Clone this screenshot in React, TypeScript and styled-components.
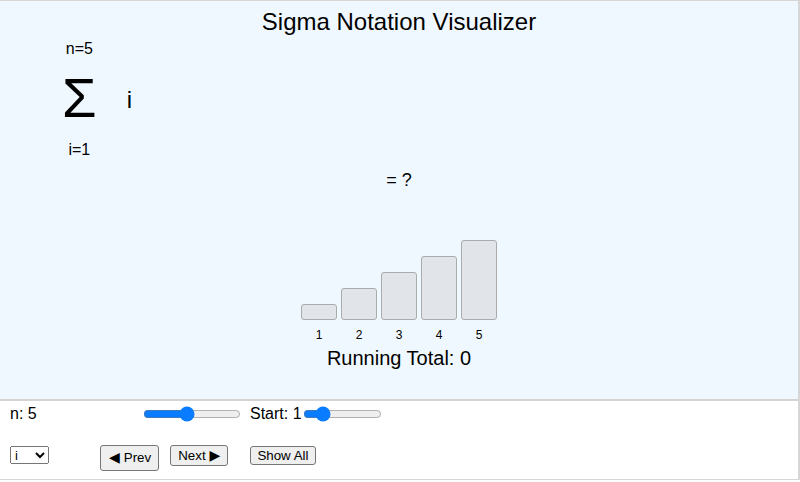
import React, { useState } from 'react';
import styled, { createGlobalStyle } from 'styled-components';

const GlobalStyle = createGlobalStyle`
  html, body {
    margin: 0;
    padding: 0;
    background: #ffffff;
  }
  body {
    font-family: "Liberation Sans", Arial, Helvetica, sans-serif;
    color: #000;
  }
  * {
    box-sizing: border-box;
  }
`;

const Frame = styled.div`
  width: 800px;
  height: 480px;
  border-top: 1px solid #d6d6d6;
  border-right: 2px solid #d6d6d6;
  border-bottom: 1px solid #d6d6d6;
  display: flex;
  flex-direction: column;
`;

const Visual = styled.section`
  height: 400px;
  background: #f0f8ff;
  border-bottom: 2px solid #d4d4d4;
  display: flex;
  flex-direction: column;
`;

const Title = styled.h1`
  margin: 0;
  padding-top: 7px;
  font-size: 24px;
  line-height: 28px;
  font-weight: normal;
  text-align: center;
`;

const SigmaRow = styled.div`
  margin-top: 4px;
  padding-left: 62px;
  display: flex;
  align-items: center;
`;

const SigmaStack = styled.div`
  display: flex;
  flex-direction: column;
  align-items: center;
`;

const Bound = styled.div<{ $gap?: number }>`
  font-size: 16px;
  line-height: 18px;
  margin-top: ${p => p.$gap ?? 0}px;
`;

const SigmaSign = styled.div`
  font-size: 56px;
  line-height: 64px;
  margin-top: 8px;
`;

const Term = styled.div`
  font-size: 24px;
  line-height: 28px;
  margin-left: 30px;
`;

const Result = styled.div`
  margin-top: 11px;
  font-size: 18px;
  line-height: 21px;
  text-align: center;
`;

const BarRow = styled.div`
  margin-top: 49px;
  display: flex;
  justify-content: center;
  align-items: flex-end;
  gap: 4px;
`;

const BarColumn = styled.div`
  display: flex;
  flex-direction: column;
  align-items: center;
`;

const Bar = styled.div<{ $active?: boolean }>`
  width: 36px;
  background: ${p => (p.$active ? '#9ecbff' : '#e1e4e8')};
  border: 1px solid #aaaaaa;
  border-radius: 3px;
`;

const BarLabel = styled.div`
  margin-top: 8px;
  font-size: 12px;
  line-height: 14px;
`;

const Total = styled.div`
  margin-top: 5px;
  font-size: 20px;
  line-height: 23px;
  text-align: center;
`;

const Controls = styled.section`
  flex: 1;
  background: #ffffff;
  padding: 4px 10px 0;
`;

const Row = styled.div<{ $top?: number }>`
  display: flex;
  align-items: center;
  margin-top: ${p => p.$top ?? 0}px;
`;

const ButtonRow = styled(Row)`
  align-items: flex-start;
`;

const Label = styled.span<{ $width?: number }>`
  font-size: 16px;
  line-height: 18px;
  width: ${p => (p.$width ? `${p.$width}px` : 'auto')};
  margin-left: ${p => (p.$width ? 0 : 9)}px;
`;

const Slider = styled.input<{ $width: number; $left?: number }>`
  width: ${p => p.$width}px;
  margin: 0 0 0 ${p => p.$left ?? 0}px;
  accent-color: #0a7cff;
`;

const Select = styled.select`
  width: 39px;
  height: 18px;
  margin-top: 1px;
  font-size: 13px;
  font-family: "Liberation Sans", Arial, sans-serif;
`;

const Button = styled.button<{ $pad: string; $left: number; $top?: number }>`
  display: flex;
  align-items: center;
  gap: 4px;
  margin-left: ${p => p.$left}px;
  margin-top: ${p => p.$top ?? 0}px;
  padding: ${p => p.$pad};
  font-family: "Liberation Sans", Arial, sans-serif;
  font-size: 13.33px;
  line-height: 15px;
  color: #000;
  background: #efefef;
  border: 1px solid #767676;
  border-radius: 3px;
  cursor: pointer;
`;

const Arrow = styled.span`
  font-family: "DejaVu Sans", sans-serif;
  font-size: 14px;
  line-height: 15px;
`;

export default function App() {
  const [n, setN] = useState(5);
  const [start, setStart] = useState(1);
  const [step, setStep] = useState(0);
  const [expr, setExpr] = useState('i');

  const values: number[] = [];
  for (let i = start; i <= n; i++) values.push(i);

  const evalTerm = (i: number) => (expr === 'i²' ? i * i : expr === '2i' ? 2 * i : i);
  const total = values.slice(0, step).reduce((s, i) => s + evalTerm(i), 0);

  return (
    <>
      <GlobalStyle />
      <Frame>
        <Visual>
          <Title>Sigma Notation Visualizer</Title>
          <SigmaRow>
            <SigmaStack>
              <Bound>n={n}</Bound>
              <SigmaSign>Σ</SigmaSign>
              <Bound $gap={11}>i={start}</Bound>
            </SigmaStack>
            <Term>{expr}</Term>
          </SigmaRow>
          <Result>= {step >= values.length && values.length ? total : '?'}</Result>
          <BarRow>
            {values.map((v, idx) => (
              <BarColumn key={v}>
                <Bar $active={idx < step} style={{ height: `${evalTerm(v) * 16}px` }} />
                <BarLabel>{v}</BarLabel>
              </BarColumn>
            ))}
          </BarRow>
          <Total>Running Total: {total}</Total>
        </Visual>
        <Controls>
          <Row>
            <Label $width={133}>n: {n}</Label>
            <Slider
              $width={98}
              type="range"
              min={1}
              max={10}
              value={n}
              onChange={e => setN(Number(e.target.value))}
            />
            <Label>Start: {start}</Label>
            <Slider
              $width={79}
              $left={1}
              type="range"
              min={0}
              max={5}
              value={start}
              onChange={e => setStart(Number(e.target.value))}
            />
          </Row>
          <ButtonRow $top={22}>
            <Select value={expr} onChange={e => setExpr(e.target.value)}>
              <option>i</option>
              <option>i²</option>
              <option>2i</option>
            </Select>
            <Button $left={51} $pad="4px 7px 5px 8px" onClick={() => setStep(s => Math.max(0, s - 1))}>
              <Arrow>◀</Arrow>Prev
            </Button>
            <Button $left={11} $pad="2px 7px" onClick={() => setStep(s => Math.min(values.length, s + 1))}>
              Next<Arrow>▶</Arrow>
            </Button>
            <Button $left={22} $top={1} $pad="1px 6px" onClick={() => setStep(values.length)}>
              Show All
            </Button>
          </ButtonRow>
        </Controls>
      </Frame>
    </>
  );
}
